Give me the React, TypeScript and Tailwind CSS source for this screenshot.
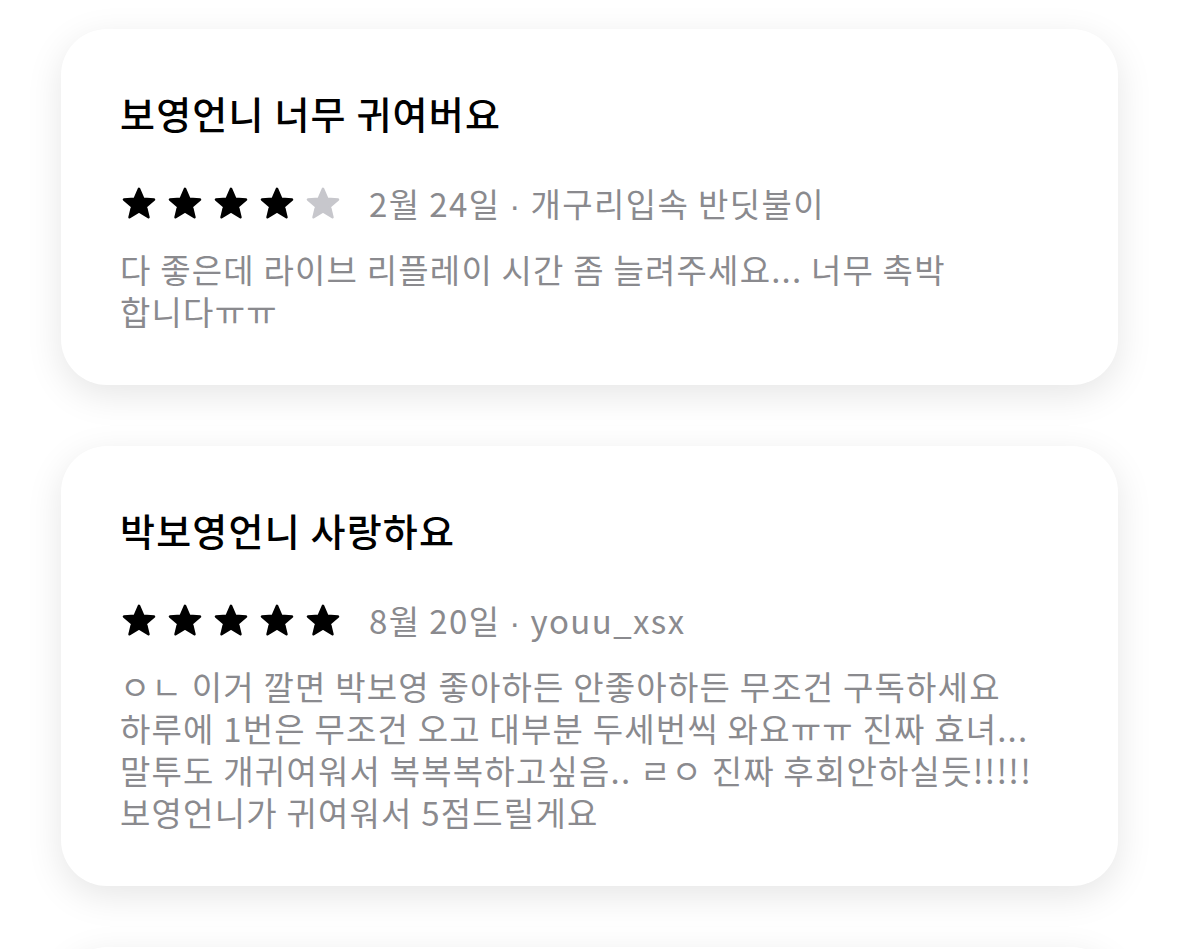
import React from "react";

const FONT = { fontFamily: '"Noto Sans CJK KR", "Noto Sans", sans-serif' };

function Star({ filled }: { filled: boolean }) {
  return (
    <svg width="38" height="36" viewBox="0 0 24 23" className="shrink-0">
      <path
        d="M12 1.8 L14.75 8.2 L21.6 8.7 L16.4 13.2 L18.05 20 L12 16.3 L5.95 20 L7.6 13.2 L2.4 8.7 L9.25 8.2 Z"
        fill={filled ? "#000000" : "#c7c7cc"}
        stroke={filled ? "#000000" : "#c7c7cc"}
        strokeWidth="1.6"
        strokeLinejoin="round"
      />
    </svg>
  );
}

function Card({
  title,
  rating,
  date,
  author,
  lines,
}: {
  title: string;
  rating: number;
  date: string;
  author: string;
  lines: string[];
}) {
  return (
    <div className="bg-white rounded-[46px] shadow-[0_10px_36px_rgba(0,0,0,0.10)] pl-[59px] pr-[30px] pt-[60px] pb-[53px]">
      <div className="text-[38px] leading-[48px] font-medium text-black tracking-[1.2px] whitespace-nowrap">
        {title}
      </div>
      <div className="mt-[49px] flex items-center h-[36px]">
        <div className="flex gap-[8px]">
          {[0, 1, 2, 3, 4].map((i) => (
            <Star key={i} filled={i < rating} />
          ))}
        </div>
        <div className="ml-[27px] text-[33px] leading-[36px] text-[#8a8a8e] whitespace-nowrap tracking-[1.4px]">
          {date}{" "}
          <span style={{ fontFamily: '"Liberation Sans", sans-serif' }}>·</span>{" "}
          {author}
        </div>
      </div>
      <div className="mt-[26px] text-[33px] leading-[42px] text-[#8a8a8e] tracking-[1.2px]">
        {lines.map((l, i) => (
          <div key={i} className="whitespace-nowrap">
            {l}
          </div>
        ))}
      </div>
    </div>
  );
}

export default function App() {
  return (
    <div
      className="min-h-[949px] w-[1179px] bg-white px-[61px] pt-[29px] flex flex-col gap-[61px] overflow-hidden"
      style={FONT}
    >
      <Card
        title="보영언니 너무 귀여버요"
        rating={4}
        date="2월 24일"
        author="개구리입속 반딧불이"
        lines={["다 좋은데 라이브 리플레이 시간 좀 늘려주세요... 너무 촉박", "합니다ㅠㅠ"]}
      />
      <Card
        title="박보영언니 사랑하요"
        rating={5}
        date="8월 20일"
        author="youu_xsx"
        lines={[
          "ㅇㄴ 이거 깔면 박보영 좋아하든 안좋아하든 무조건 구독하세요",
          "하루에 1번은 무조건 오고 대부분 두세번씩 와요ㅠㅠ 진짜 효녀...",
          "말투도 개귀여워서 복복복하고싶음.. ㄹㅇ 진짜 후회안하실듯!!!!!",
          "보영언니가 귀여워서 5점드릴게요",
        ]}
      />
      <div className="bg-white rounded-[46px] shadow-[0_10px_36px_rgba(0,0,0,0.10)] h-[300px] shrink-0" />
    </div>
  );
}
